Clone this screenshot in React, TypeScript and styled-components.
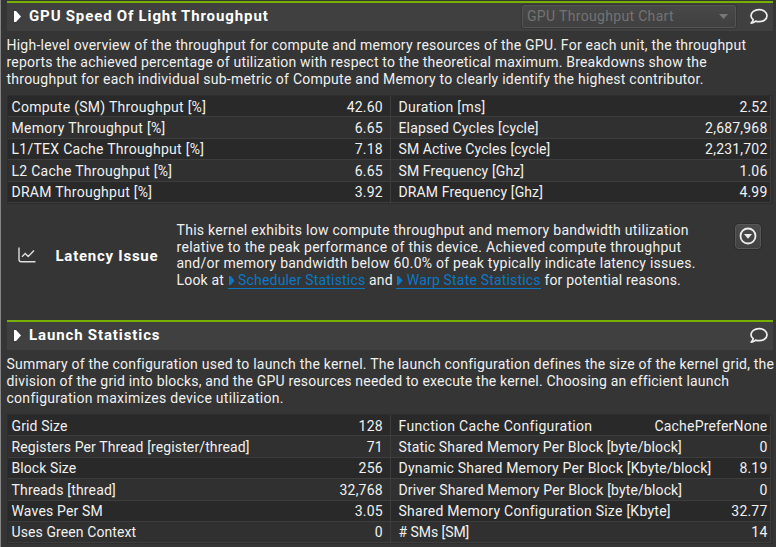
import React from "react";
import styled, { createGlobalStyle } from "styled-components";

const GlobalStyle = createGlobalStyle`
  * { box-sizing: border-box; }
  body { margin: 0; background: #353535; overflow: hidden; }
`;

const Page = styled.main`
  width: 776px;
  height: 547px;
  overflow: hidden;
  padding: 1px 3px 0 5.5px;
  border-left: 1px solid #858585;
  background: #353535;
  color: #f0f0f0;
  font: 400 14px/16.67px Roboto, sans-serif;
`;

const Section = styled.section<{ $height: number }>`
  height: ${(p) => p.$height}px;
`;

const Header = styled.header`
  display: flex;
  align-items: center;
  height: 30px;
  border-top: 2px solid #76b000;
  background: #404040;
  padding: 0 5px 1px 7px;
`;

const Title = styled.h2`
  margin: 0 auto 0 8.5px;
  color: #fff;
  font-size: 15px;
  font-weight: 700;
  line-height: 17px;
  letter-spacing: 0.9px;
  word-spacing: -0.4px;
  white-space: nowrap;
`;

const Dropdown = styled.button`
  display: flex;
  align-items: center;
  justify-content: space-between;
  width: 214px;
  height: 23px;
  margin-right: 14px;
  padding: 0 7px 0 4px;
  border: 1px solid #555;
  border-radius: 2px;
  outline: 1px solid #363636;
  background: linear-gradient(#484848, #404040);
  color: #737373;
  font: inherit;
  letter-spacing: 0.33px;
`;

const Description = styled.div`
  height: 64px;
  padding-top: 6.4px;
`;

const Line = styled.div<{ $spacing: number }>`
  height: 16.67px;
  white-space: nowrap;
  letter-spacing: ${(p) => p.$spacing}px;
`;

const Table = styled.div`
  border: 1px solid #2d2d2d;
  border-right: 2px solid #303030;
`;

const Row = styled.div<{ $alt: boolean }>`
  display: grid;
  grid-template-columns: 383px 1fr;
  height: 21.4px;
  border-bottom: 1px solid #3d3d3d;
  background: ${(p) => (p.$alt ? "#303030" : "#292929")};
`;

const Cell = styled.div`
  display: flex;
  justify-content: space-between;
  padding: 2.5px 2.5px 0 4px;
  border-right: 1px solid #3d3d3d;
  white-space: nowrap;
  &:first-child { padding-right: 6.7px; }
  &:last-child { padding-left: 8px; }
`;

const Label = styled.span<{ $spacing: number }>`
  letter-spacing: ${(p) => p.$spacing}px;
`;

const Value = styled.span`
  letter-spacing: 0.2px;
`;

const Issue = styled.div`
  display: grid;
  grid-template-columns: 49px 121px 1fr 26px;
  align-items: center;
  height: 67px;
  margin-top: 18px;
  padding: 0 12px 0 0;
`;

const IssueIcon = styled.div`
  display: flex;
  padding-left: 11px;
`;

const IssueTitle = styled.strong`
  padding-top: 2px;
  color: #fff;
  font-size: 15px;
  letter-spacing: 0.75px;
`;

const Link = styled.a`
  color: #0b78c6;
  border-bottom: 1px solid #0b78c6;
  svg { margin: 0 0 0 1px; }
`;

const RoundButton = styled.button`
  display: grid;
  place-items: center;
  align-self: start;
  width: 26px;
  height: 25px;
  margin-top: 2px;
  padding: 0;
  border: 1px solid #575757;
  border-radius: 3px;
  outline: 1px solid #2c2c2c;
  background: linear-gradient(#4b4b4b, #414141);
`;

const Arrow = ({ size = 11, color = "#fff" }: { size?: number; color?: string }) => (
  <svg width={(size * 7) / 11} height={size} viewBox="0 0 7 11">
    <path d="M0 0H2L7 5.5L2 11H0Z" fill={color} />
  </svg>
);

const Comment = () => (
  <svg width="18" height="17" viewBox="0 0 18 17" fill="none" stroke="#f0f0f0" strokeWidth="1.7">
    <path d="M3.2 11.7C1.7 10.5 1 9.1 1 7.7C1 4.2 4.6 1.6 9 1.6S17 4.2 17 7.7S13.4 13.7 9 13.7C7.8 13.7 6.6 13.5 5.6 13.1C4.4 14.2 2.8 14.9 1.2 15.1C2.3 14 3 12.8 3.2 11.7Z" strokeLinejoin="round" />
  </svg>
);

type Metric = { label: string; value: string; spacing: number };

const throughput: [Metric, Metric][] = [
  [{ label: "Compute (SM) Throughput [%]", value: "42.60", spacing: 0.28 }, { label: "Duration [ms]", value: "2.52", spacing: 0.3 }],
  [{ label: "Memory Throughput [%]", value: "6.65", spacing: 0.29 }, { label: "Elapsed Cycles [cycle]", value: "2,687,968", spacing: 0.15 }],
  [{ label: "L1/TEX Cache Throughput [%]", value: "7.18", spacing: 0.27 }, { label: "SM Active Cycles [cycle]", value: "2,231,702", spacing: 0.08 }],
  [{ label: "L2 Cache Throughput [%]", value: "6.65", spacing: 0.27 }, { label: "SM Frequency [Ghz]", value: "1.06", spacing: 0.12 }],
  [{ label: "DRAM Throughput [%]", value: "3.92", spacing: 0.27 }, { label: "DRAM Frequency [Ghz]", value: "4.99", spacing: 0.12 }],
];

const launch: [Metric, Metric][] = [
  [{ label: "Grid Size", value: "128", spacing: 0.12 }, { label: "Function Cache Configuration", value: "CachePreferNone", spacing: 0.33 }],
  [{ label: "Registers Per Thread [register/thread]", value: "71", spacing: 0.12 }, { label: "Static Shared Memory Per Block [byte/block]", value: "0", spacing: 0.15 }],
  [{ label: "Block Size", value: "256", spacing: 0.08 }, { label: "Dynamic Shared Memory Per Block [Kbyte/block]", value: "8.19", spacing: 0.2 }],
  [{ label: "Threads [thread]", value: "32,768", spacing: 0.18 }, { label: "Driver Shared Memory Per Block [byte/block]", value: "0", spacing: 0.15 }],
  [{ label: "Waves Per SM", value: "3.05", spacing: 0.17 }, { label: "Shared Memory Configuration Size [Kbyte]", value: "32.77", spacing: 0.26 }],
  [{ label: "Uses Green Context", value: "0", spacing: 0.1 }, { label: "# SMs [SM]", value: "14", spacing: -0.05 }],
];

const Metrics = ({ rows }: { rows: [Metric, Metric][] }) => (
  <Table>
    {rows.map((row, i) => (
      <Row key={row[0].label} $alt={i % 2 === 1}>
        {row.map((m) => (
          <Cell key={m.label}>
            <Label $spacing={m.spacing}>{m.label}</Label>
            <Value>{m.value}</Value>
          </Cell>
        ))}
      </Row>
    ))}
  </Table>
);

export default function App() {
  return (
    <Page>
      <GlobalStyle />
      <Section $height={319}>
        <Header>
          <Arrow />
          <Title>GPU Speed Of Light Throughput</Title>
          <Dropdown>
            GPU Throughput Chart
            <svg width="9" height="5" viewBox="0 0 9 5"><path d="M0 0H9L4.5 5Z" fill="#777" /></svg>
          </Dropdown>
          <Comment />
        </Header>
        <Description>
          <Line $spacing={0.235}>High-level overview of the throughput for compute and memory resources of the GPU. For each unit, the throughput</Line>
          <Line $spacing={0.2}>reports the achieved percentage of utilization with respect to the theoretical maximum. Breakdowns show the</Line>
          <Line $spacing={0.245}>throughput for each individual sub-metric of Compute and Memory to clearly identify the highest contributor.</Line>
        </Description>
        <Metrics rows={throughput} />
        <Issue>
          <IssueIcon>
            <svg width="18" height="16" viewBox="0 0 18 16" fill="none" stroke="#dedede" strokeWidth="1.4">
              <path d="M1 0.5V12.5Q1 14.8 3.3 14.8H17.5M4 9.7L7.2 6.5L10.2 9.5L16 3.5" />
            </svg>
          </IssueIcon>
          <IssueTitle>Latency Issue</IssueTitle>
          <div>
            <Line $spacing={0.29}>This kernel exhibits low compute throughput and memory bandwidth utilization</Line>
            <Line $spacing={0.3}>relative to the peak performance of this device. Achieved compute throughput</Line>
            <Line $spacing={0.25}>and/or memory bandwidth below 60.0% of peak typically indicate latency issues.</Line>
            <Line $spacing={0.18}>
              Look at <Link><Arrow size={9} color="#0b78c6" /> Scheduler Statistics</Link> and{" "}
              <Link><Arrow size={9} color="#0b78c6" /> Warp State Statistics</Link> for potential reasons.
            </Line>
          </div>
          <RoundButton>
            <svg width="18" height="18" viewBox="0 0 18 18">
              <circle cx="9" cy="9" r="7.5" fill="none" stroke="#eee" strokeWidth="1.8" />
              <path d="M5 7H13L9 11.7Z" fill="#eee" />
            </svg>
          </RoundButton>
        </Issue>
      </Section>
      <Section $height={227}>
        <Header>
          <Arrow />
          <Title>Launch Statistics</Title>
          <Comment />
        </Header>
        <Description>
          <Line $spacing={0.222}>Summary of the configuration used to launch the kernel. The launch configuration defines the size of the kernel grid, the</Line>
          <Line $spacing={0.19}>division of the grid into blocks, and the GPU resources needed to execute the kernel. Choosing an efficient launch</Line>
          <Line $spacing={0.28}>configuration maximizes device utilization.</Line>
        </Description>
        <Metrics rows={launch} />
      </Section>
    </Page>
  );
}
